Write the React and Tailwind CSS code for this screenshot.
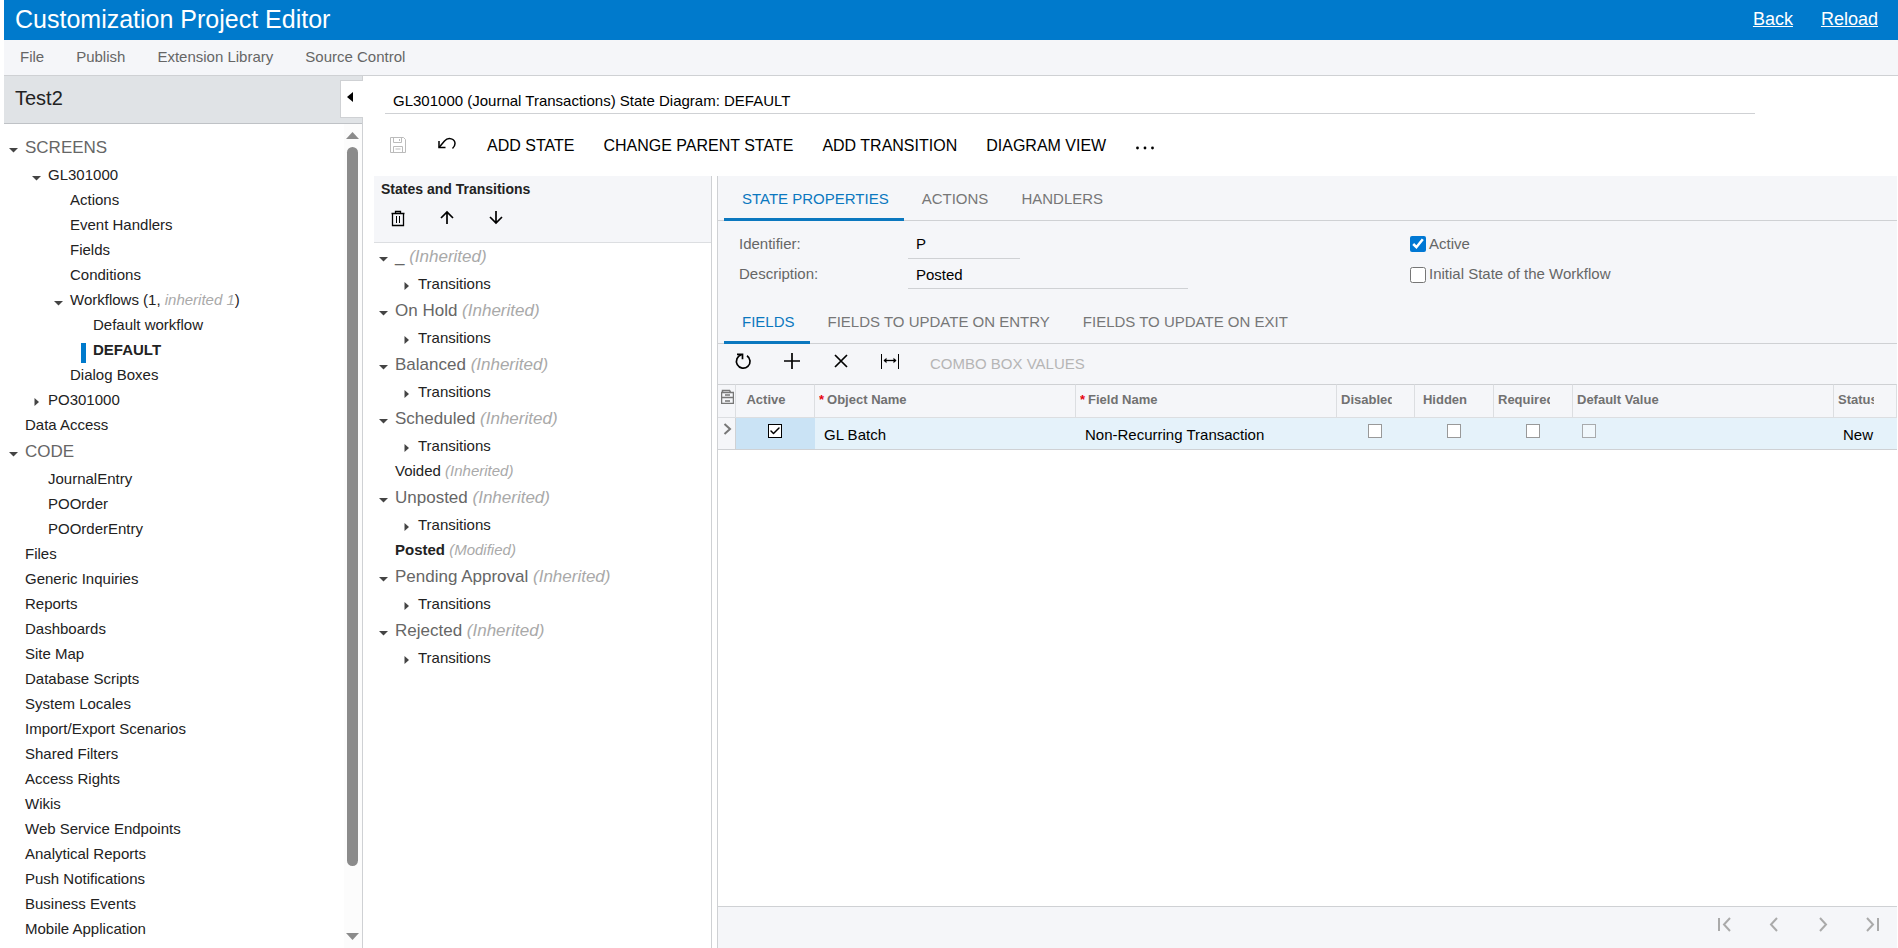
import { useState } from "react";
import clsx from "clsx";
import { Check } from "lucide-react";

const menu = ["File", "Publish", "Extension Library", "Source Control"];

const projectTree = [
  { label: "SCREENS", level: 0, group: true, arrow: "down" },
  { label: "GL301000", level: 1, arrow: "down" },
  { label: "Actions", level: 2 },
  { label: "Event Handlers", level: 2 },
  { label: "Fields", level: 2 },
  { label: "Conditions", level: 2 },
  { label: "Workflows (1, ", note: "inherited 1", tail: ")", level: 2, arrow: "down" },
  { label: "Default workflow", level: 3 },
  { label: "DEFAULT", level: 3, selected: true },
  { label: "Dialog Boxes", level: 2 },
  { label: "PO301000", level: 1, arrow: "right" },
  { label: "Data Access", level: 0 },
  { label: "CODE", level: 0, group: true, arrow: "down" },
  { label: "JournalEntry", level: 1 },
  { label: "POOrder", level: 1 },
  { label: "POOrderEntry", level: 1 },
  { label: "Files", level: 0 },
  { label: "Generic Inquiries", level: 0 },
  { label: "Reports", level: 0 },
  { label: "Dashboards", level: 0 },
  { label: "Site Map", level: 0 },
  { label: "Database Scripts", level: 0 },
  { label: "System Locales", level: 0 },
  { label: "Import/Export Scenarios", level: 0 },
  { label: "Shared Filters", level: 0 },
  { label: "Access Rights", level: 0 },
  { label: "Wikis", level: 0 },
  { label: "Web Service Endpoints", level: 0 },
  { label: "Analytical Reports", level: 0 },
  { label: "Push Notifications", level: 0 },
  { label: "Business Events", level: 0 },
  { label: "Mobile Application", level: 0 }
];

const transitions = { label: "Transitions", level: 1, arrow: "right" };

const stateTree = [
  { label: "_ ", note: "(Inherited)", level: 0, group: true, arrow: "down" },
  transitions,
  { label: "On Hold ", note: "(Inherited)", level: 0, group: true, arrow: "down" },
  transitions,
  { label: "Balanced ", note: "(Inherited)", level: 0, group: true, arrow: "down" },
  transitions,
  { label: "Scheduled ", note: "(Inherited)", level: 0, group: true, arrow: "down" },
  transitions,
  { label: "Voided ", note: "(Inherited)", level: 0 },
  { label: "Unposted ", note: "(Inherited)", level: 0, group: true, arrow: "down" },
  transitions,
  { label: "Posted ", note: "(Modified)", level: 0, bold: true },
  { label: "Pending Approval ", note: "(Inherited)", level: 0, group: true, arrow: "down" },
  transitions,
  { label: "Rejected ", note: "(Inherited)", level: 0, group: true, arrow: "down" },
  transitions
];

const indents = ["pl-[5px]", "pl-[28px]", "pl-[50px]", "pl-[73px]"];

function TreeArrow({ dir }) {
  return (
    <svg width="9" height="9" viewBox="0 0 9 9" fill="#444" className="mt-1">
      {dir === "down" && <path d="M0 3h9L4.500 7.500z"/>}
      {dir === "right" && <path d="M2.500 0v8l4.500-4z"/>}
    </svg>
  );
}

function Tree({ items }) {
  return (
    <ul>
      {items.map((item, i) => (
        <li
          key={i}
          className={clsx(
            "flex items-center whitespace-nowrap",
            indents[item.level],
            item.group ? "h-[29px] pb-0.5 text-[17px] text-[#666]" : "h-[25px] text-[15px] text-[#222]"
          )}
        >
          <span className="w-4 flex-none flex">
            {item.selected
              ? <span className="ml-1 mt-1 w-[5px] h-5 bg-[#007acc]"></span>
              : <TreeArrow dir={item.arrow}/>}
          </span>
          <a href="#" className="whitespace-pre">
            <span className={item.selected || item.bold ? "font-bold" : ""}>{item.label}</span>
            {item.note && <i className="text-[#a9a9a9]">{item.note}</i>}
            {item.tail}
          </a>
        </li>
      ))}
    </ul>
  );
}

function Icon({ w = 18, h = 18, stroke = 2, className, children }) {
  return (
    <svg width={w} height={h} viewBox={`0 0 ${w} ${h}`} fill="none" stroke="currentColor" strokeWidth={stroke} className={className}>
      {children}
    </svg>
  );
}

function Tabs({ tabs }) {
  const [active, setActive] = useState(tabs[0]);

  return (
    <div className="flex items-end h-[45px] pl-1.5 border-b border-[#cfd1d4] text-[15px]">
      {tabs.map((tab) => (
        <button
          key={tab}
          onClick={() => setActive(tab)}
          className={clsx(
            "h-[38px] -mb-px pl-[18px] pr-[15px] pb-[3px] border-b-3 whitespace-nowrap",
            tab === active ? "border-[#0b78bf] text-[#0b78bf]" : "border-transparent text-[#777]"
          )}
        >
          {tab}
        </button>
      ))}
    </div>
  );
}

function GridCheck({ label, checked, disabled }) {
  return (
    <span className="relative inline-flex size-3.5 align-top">
      <input
        type="checkbox"
        aria-label={label}
        defaultChecked={checked}
        disabled={disabled}
        className={clsx(
          "appearance-none size-3.5 border peer",
          checked ? "border-black" : "border-[#999]",
          disabled ? "bg-[#f4fafd] opacity-80" : "bg-white"
        )}
      />
      <Check size={12} strokeWidth={3} className="absolute left-px top-px hidden peer-checked:block pointer-events-none"/>
    </span>
  );
}

function HeadCell({ children, required, center }) {
  return (
    <th className="border-r border-b border-[#dcdee1] pl-1 pr-[22px] pb-0.5 font-bold text-[#717171]">
      <div className={clsx("overflow-hidden whitespace-nowrap", center ? "text-center" : "text-left")}>
        {required && <span className="text-red-600 mr-[3px]">*</span>}
        {children}
      </div>
    </th>
  );
}

export default function CustomizationEditor() {
  return (
    <div className="flex flex-col h-screen pl-1 overflow-hidden bg-white text-[#222] font-['Liberation_Sans',Arial,sans-serif]">

      {/* TITLE BAR */}
      <header className="flex items-center justify-between flex-none h-10 pl-[11px] pr-5 pb-[3px] bg-[#007acc] text-white">
        <h1 className="text-[25px] leading-8">Customization Project Editor</h1>
        <div className="flex gap-7 text-[18px] leading-6">
          <a href="#" className="underline">Back</a>
          <a href="#" className="underline">Reload</a>
        </div>
      </header>

      {/* MENU */}
      <nav className="flex items-center flex-none h-9 gap-8 pl-4 bg-[#f5f6f9] border-b border-[#cfd1d4] text-[15px] text-[#666]">
        {menu.map((item) => (
          <button key={item}>{item}</button>
        ))}
      </nav>

      <div className="flex flex-1 min-h-0">

        {/* PROJECT TREE */}
        <aside className="flex flex-col flex-none w-[359px] border-r border-[#cfd1d4]">

          <div className="flex justify-between items-start flex-none h-12 pl-[11px] pt-1 bg-[#e0e3e6] border-b border-[#bfc2c6]">
            <h2 className="text-[20px] leading-9">Test2</h2>
            <button aria-label="Collapse" className="-mr-px w-[23px] h-[38px] pl-1.5 bg-white border border-r-0 border-[#cfd1d4]">
              <svg width="6" height="10" viewBox="0 0 6 10" className="mb-1"><path d="M6 0v10L0 5z"/></svg>
            </button>
          </div>

          <div className="flex flex-1 min-h-0">
            <div className="flex-1 pt-2.5 overflow-hidden">
              <Tree items={projectTree}/>
            </div>

            {/* scrollbar */}
            <div className="flex flex-col items-center flex-none w-[18px] pt-2 pb-2 pr-px bg-[#fcfcfc]">
              <svg width="13" height="7" viewBox="0 0 13 7" fill="#8b8b8b"><path d="M6.500 0L13 7H0z"/></svg>
              <div className="flex-1 w-[11px] mt-2 mb-[67px] rounded-full bg-[#8b8b8b]"></div>
              <svg width="13" height="7" viewBox="0 0 13 7" fill="#8b8b8b"><path d="M0 0h13L6.500 7z"/></svg>
            </div>
          </div>

        </aside>

        {/* MAIN */}
        <main className="flex flex-col flex-1 min-w-0">

          <div className="flex-none ml-[22px] mr-[143px] h-[38px] border-b border-[#cfd1d4]">
            <input
              aria-label="Screen title"
              defaultValue="GL301000 (Journal Transactions) State Diagram: DEFAULT"
              className="w-full h-full px-2 pt-3 text-[15px] text-black outline-none"
            />
          </div>

          {/* TOOLBAR */}
          <div className="flex items-center flex-none h-[62px] pl-[26px] gap-[31px] text-base text-black whitespace-nowrap">
            <button aria-label="Save" disabled className="text-[#bbb]">
              <Icon stroke={1}>
                <path d="M1.500 1.500h13l2 2v13h-15z"/>
                <path d="M4.500 1.500v5h8v-5M4.500 16.500v-6h9v6M10.500 3v2M6.500 13h5"/>
              </Icon>
            </button>
            <button aria-label="Undo">
              <Icon stroke={1.5}>
                <path d="M1 5v6.500h6.500"/>
                <path d="M1 11.500L6.500 5C10.500 .5 17 3 17 7.500c0 2-.8 3.500-2.500 5"/>
              </Icon>
            </button>
            <div className="flex items-center gap-[29px] pt-0.5">
              <button>ADD STATE</button>
              <button>CHANGE PARENT STATE</button>
              <button>ADD TRANSITION</button>
              <button>DIAGRAM VIEW</button>
              <button aria-label="More">
                <svg width="20" height="18" viewBox="0 0 20 18"><circle cx="2.500" cy="11" r="1.400"/><circle cx="10" cy="11" r="1.400"/><circle cx="17.500" cy="11" r="1.400"/></svg>
              </button>
            </div>
          </div>

          <div className="flex flex-1 min-h-0 pl-[11px] pr-px gap-[5px]">

            {/* STATES */}
            <section className="flex-none w-[338px] border-r border-[#cfd1d4]">
              <div className="h-[67px] pl-[7px] pt-[3px] bg-[#f5f6f9] border-b border-[#dcdee1]">
                <h3 className="text-[14px] leading-5 font-bold">States and Transitions</h3>
                <div className="flex gap-[31px] pl-2 pt-2.5 text-black">
                  <button aria-label="Delete">
                    <Icon stroke={1}>
                      <path d="M2.500 4.500h13M3.500 4.500v12h11v-12M6.500 4V2.500h5V4" strokeWidth="1.300"/>
                      <path d="M7.500 7v7M10.500 7v7"/>
                    </Icon>
                  </button>
                  <button aria-label="Move up">
                    <Icon stroke={1.7}><path d="M9 15V3M3 9l6-6 6 6"/></Icon>
                  </button>
                  <button aria-label="Move down">
                    <Icon stroke={1.7}><path d="M9 2v12M3 8l6 6 6-6"/></Icon>
                  </button>
                </div>
              </div>
              <Tree items={stateTree}/>
            </section>

            {/* PROPERTIES */}
            <section className="flex flex-col flex-1 min-w-0 border-l border-[#cfd1d4]">
              <div className="flex-none bg-[#f5f6f9]">
                <Tabs tabs={["STATE PROPERTIES", "ACTIONS", "HANDLERS"]}/>

                <div className="flex h-[78px] pl-[21px] pt-2 text-[15px] text-[#666]">
                  <div className="w-[671px]">
                    <div className="flex items-center h-[30px]">
                      <label htmlFor="identifier" className="w-[169px]">Identifier:</label>
                      <input id="identifier" defaultValue="P" className="w-28 h-[29px] px-2 border-b border-[#cfd1d4] text-black outline-none"/>
                    </div>
                    <div className="flex items-center h-[31px]">
                      <label htmlFor="description" className="w-[169px]">Description:</label>
                      <input id="description" defaultValue="Posted" className="w-[280px] h-[29px] px-2 border-b border-[#cfd1d4] text-black outline-none"/>
                    </div>
                  </div>
                  <div>
                    <label className="flex items-center h-[30px] gap-[3px]">
                      <input type="checkbox" defaultChecked className="size-4 accent-[#0078d4]"/>
                      Active
                    </label>
                    <label className="flex items-center h-[31px] gap-[3px]">
                      <input type="checkbox" className="size-4 accent-[#0078d4]"/>
                      Initial State of the Workflow
                    </label>
                  </div>
                </div>

                <Tabs tabs={["FIELDS", "FIELDS TO UPDATE ON ENTRY", "FIELDS TO UPDATE ON EXIT"]}/>

                <div className="flex items-center h-10 pl-4 pb-1.5 gap-[31px] text-black">
                  <button aria-label="Refresh">
                    <Icon stroke={1.7}>
                      <path d="M7.500 2.800A6.800 6.800 0 1 0 13 3.700"/>
                      <path d="M3 2.300h5.500v5"/>
                    </Icon>
                  </button>
                  <button aria-label="Add row">
                    <Icon stroke={1.7}><path d="M9 1v16M1 9h16"/></Icon>
                  </button>
                  <button aria-label="Delete row">
                    <Icon stroke={1.7}><path d="M3 3l12 12M15 3L3 15"/></Icon>
                  </button>
                  <button aria-label="Fit to screen">
                    <Icon stroke={1}>
                      <path d="M.5 2v15M17.500 2v15"/>
                      <path d="M3 8.500h12" strokeWidth="1.300"/>
                      <path d="M5.500 5.800v5.400L2.500 8.500zM12.500 5.800v5.400l3-2.700z" fill="currentColor" stroke="none"/>
                    </Icon>
                  </button>
                  <button disabled className="pt-1.5 text-[15px] text-[#b5b5b5]">COMBO BOX VALUES</button>
                </div>
              </div>

              {/* GRID */}
              <div className="flex-1 min-h-0 overflow-hidden">
                <table className="table-fixed w-full border-separate border-spacing-0 text-[13px]">
                  <colgroup>
                    <col className="w-[18px]"/>
                    <col className="w-[79px]"/>
                    <col className="w-[261px]"/>
                    <col className="w-[261px]"/>
                    <col className="w-[78px]"/>
                    <col className="w-[79px]"/>
                    <col className="w-[79px]"/>
                    <col className="w-[261px]"/>
                    <col/>
                  </colgroup>
                  <thead>
                    <tr className="h-[34px] bg-[#f5f6f9] [&>th]:border-t [&>th]:border-t-[#cfd1d4]">
                      <th className="border-r border-b border-[#dcdee1] align-top pt-1 pl-[3px]">
                        <Icon w={13} h={15} stroke={1} className="text-[#777]">
                          <path d="M1.500 3V1.500h7l1 1.500" strokeWidth="1.500"/>
                          <path d="M.5 3.500h12v11H.5zM.5 8.500h12" strokeWidth="1.500"/>
                          <path d="M4 6h5M4 12h5" strokeWidth="1.500"/>
                        </Icon>
                      </th>
                      <HeadCell center>Active</HeadCell>
                      <HeadCell required>Object Name</HeadCell>
                      <HeadCell required>Field Name</HeadCell>
                      <HeadCell center>Disabled</HeadCell>
                      <HeadCell center>Hidden</HeadCell>
                      <HeadCell center>Required</HeadCell>
                      <HeadCell>Default Value</HeadCell>
                      <HeadCell>Status</HeadCell>
                    </tr>
                  </thead>
                  <tbody>
                    <tr className="h-8 bg-[#e5f2fa] text-black [&>td]:border-b [&>td]:border-[#cfd1d4]">
                      <td className="border-r bg-[#f5f6f9] align-top pt-[5px] pl-[5px]">
                        <Icon w={9} h={12} className="text-[#777]"><path d="M1.500 1l5.500 5-5.500 5"/></Icon>
                      </td>
                      <td className="bg-[#cae3f5] text-center align-top pt-1.5 pr-0.5"><GridCheck label="Active" checked/></td>
                      <td className="pl-[9px] pt-1 text-[15px]">GL Batch</td>
                      <td className="pl-[9px] pt-1 text-[15px]">Non-Recurring Transaction</td>
                      <td className="text-center align-top pt-1.5 pr-0.5"><GridCheck label="Disabled"/></td>
                      <td className="text-center align-top pt-1.5 pr-0.5"><GridCheck label="Hidden"/></td>
                      <td className="text-center align-top pt-1.5 pr-0.5"><GridCheck label="Required"/></td>
                      <td className="pl-[9px] align-top pt-1.5"><GridCheck label="Default Value" disabled/></td>
                      <td className="pl-[9px] pt-1 text-[15px]">New</td>
                    </tr>
                  </tbody>
                </table>
              </div>

              {/* PAGER */}
              <div className="flex justify-end flex-none h-[42px] pr-4 pt-[9px] gap-[31px] bg-[#f5f6f9] border-t border-[#cfd1d4] text-[#aaa]">
                <button aria-label="First page" className="h-4"><Icon h={16}><path d="M3 2v13M14 2L8 8.500l6 6.500"/></Icon></button>
                <button aria-label="Previous page" className="h-4"><Icon h={16}><path d="M12 2L6 8.500l6 6.500"/></Icon></button>
                <button aria-label="Next page" className="h-4"><Icon h={16}><path d="M6 2l6 6.500L6 15"/></Icon></button>
                <button aria-label="Last page" className="h-4"><Icon h={16}><path d="M4 2l6 6.500L4 15M15 2v13"/></Icon></button>
              </div>
            </section>

          </div>

        </main>

      </div>

    </div>
  );
}
